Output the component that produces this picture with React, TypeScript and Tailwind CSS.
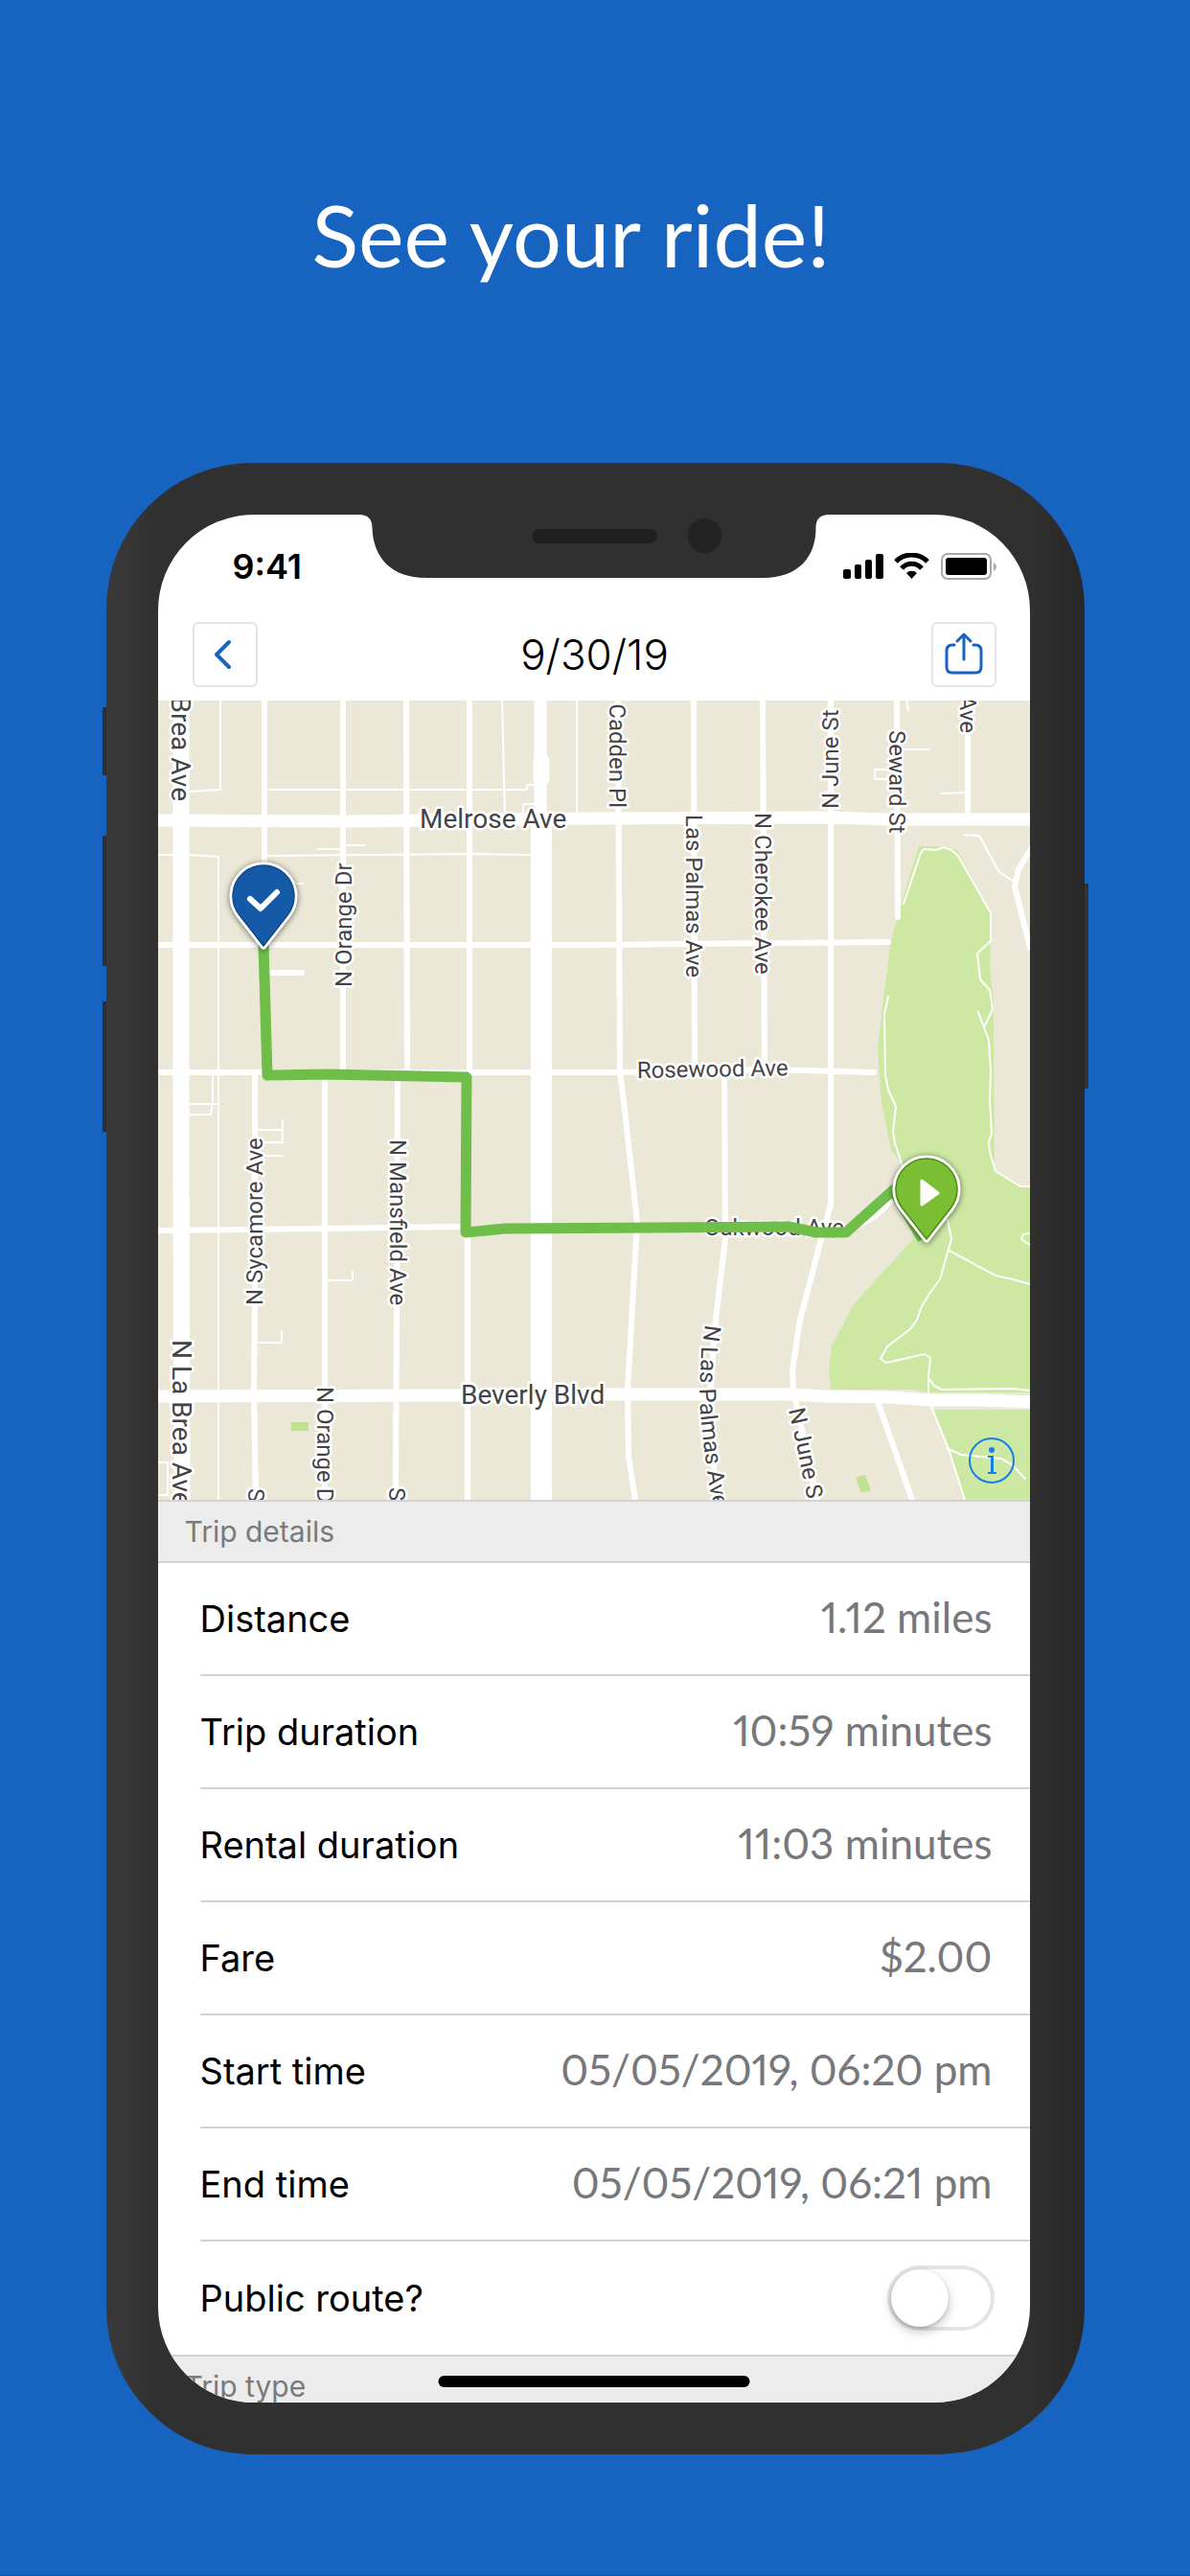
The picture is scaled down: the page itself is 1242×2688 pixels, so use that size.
import { useState } from "react";

const ROADS: { width: number; paths: string[] }[] = [
  {
    width: 2,
    paths: [
      "M65 0V93L33 95",
      "M0 161H16M33 161L63 163V834",
      "M359 0L362 119",
      "M437 0V118",
      "M114 93H385V88H393M381 118V108H393",
      "M114 162L325 160L388 161",
      "M166 155H190M196 151H216M145 191H151",
      "M57 391V419L55 432H33M33 421H62",
      "M104 448H130V438M108 461H130V450M110 475H130",
      "M178 605H203V596M103 670H129V658",
      "M0 795H10V829H0",
      "M781 0L783 10M779 51H805M761 72H748V82H761M818 97L842 96",
      "M841 140L857 141L878 179L892 188",
    ],
  },
  {
    width: 6,
    paths: [
      "M111 0V259",
      "M193 0V388",
      "M259 0L260 388",
      "M325 0V388",
      "M480 0L482 387L486 419L500 544L490 719L491 789L498 834",
      "M559 0L560 387",
      "M631 0L633 387",
      "M702 0V526L692 562L670 646L662 699L663 720L688 834",
      "M771 0L772 226",
      "M845 0V122",
      "M0 255H455L762 252",
      "M117 284H150",
      "M0 388H482L640 385L747 388",
      "M591 387L592 562L582 646L575 740L583 834",
      "M0 553L174 551L315 549",
      "M718 553L738 544L750 537L765 522",
      "M101 391V632L100 719L102 834",
      "M174 391V834",
      "M250 391L249 632L248 834",
      "M323 556V834",
      "M752 734L787 834",
      "M912 153L898 176L894 194L910 258",
    ],
  },
  {
    width: 13,
    paths: [
      "M0 125L200 126L455 123L702 122L760 124H910",
      "M0 726L315 725L455 724H662L695 726L765 727L805 730L860 730L910 732",
      "M399 0V125",
    ],
  },
  { width: 17, paths: ["M24 0V500L25 834", "M400 63V82"] },
  { width: 22, paths: ["M400 130V834"] },
];

const TRAILS = [
  "M778 212L796 159L799 155L812 156L820 153L828 156L835 162L869 222V251L855 264L858 291L868 302L871 322L862 341L867 354L869 387L868 417L870 451L867 462L868 471L874 491L900 507H910",
  "M862 341L856 325",
  "M762 309L758 327L759 391L762 406L770 424L767 449L769 462L777 486",
  "M824 542L828 562L816 604L807 616L797 632L792 646L785 656L761 674L754 687L760 691L800 682L806 686L804 706V726",
  "M804 707L810 715L818 719L892 718L910 720",
  "M826 574L874 600L892 604L910 609",
  "M910 556L903 557L901 562L910 568",
  "M807 737L825 781L842 834",
  "M823 780L838 787L880 791L892 798L905 812",
];

type StreetLabel = {
  text: string;
  x: number;
  y: number;
  angle: number;
  major?: boolean;
  end?: boolean;
};

const STREET_LABELS: StreetLabel[] = [
  { text: "Brea Ave", x: 14, y: 105, angle: 90, major: true, end: true },
  { text: "Melrose Ave", x: 273, y: 133, angle: 0, major: true },
  { text: "N Orange Dr", x: 202, y: 299, angle: -90 },
  { text: "Cadden Pl", x: 471, y: 112, angle: 90, end: true },
  { text: "Las Palmas Ave", x: 551, y: 119, angle: 90 },
  { text: "N Cherokee Ave", x: 623, y: 117, angle: 90 },
  { text: "N June St", x: 710, y: 113, angle: -90 },
  { text: "Seward St", x: 763, y: 31, angle: 90 },
  { text: "Ave", x: 837, y: 34, angle: 90, end: true },
  { text: "Rosewood Ave", x: 500, y: 394, angle: -1 },
  { text: "N Sycamore Ave", x: 109, y: 631, angle: -90 },
  { text: "N Mansfield Ave", x: 242, y: 458, angle: 90 },
  { text: "N La Brea Ave", x: 15, y: 667, angle: 90, major: true },
  { text: "N Orange D", x: 166, y: 716, angle: 90 },
  { text: "S", x: 94, y: 822, angle: 90 },
  { text: "S", x: 241, y: 821, angle: 90 },
  { text: "Beverly Blvd", x: 316, y: 734, angle: 0, major: true },
  { text: "Oakwood Ave", x: 570, y: 558, angle: 0 },
];

const TRIP_DETAILS = [
  { label: "Distance", value: "1.12 miles" },
  { label: "Trip duration", value: "10:59 minutes" },
  { label: "Rental duration", value: "11:03 minutes" },
  { label: "Fare", value: "$2.00" },
  { label: "Start time", value: "05/05/2019, 06:20 pm" },
  { label: "End time", value: "05/05/2019, 06:21 pm" },
];

const PIN_PATH = "M0 52L-25 20A32 32 0 1 1 25 20Z";

function MapPin({ x, y, fill, edge, children }: { x: number; y: number; fill: string; edge: string; children: React.ReactNode }) {
  return (
    <g transform={`translate(${x} ${y})`}>
      <path d={PIN_PATH} className="fill-white stroke-white drop-shadow-[0_1px_3px_rgba(0,0,0,0.55)]" strokeWidth="7" strokeLinejoin="round" />
      <path d={PIN_PATH} fill={fill} stroke={edge} strokeWidth="1.5" strokeLinejoin="round" />
      {children}
    </g>
  );
}

function RouteMap() {
  return (
    <div className="relative">
      <svg viewBox="0 0 910 834" className="block w-full bg-[#ece8d8]" role="img" aria-label="Route map">
        {/* Parks */}
        <g className="fill-[#cce8a2]">
          <path d="M794 152L822 152L835 157L869 222V252L868 277L872 314L873 489L900 507H910V722H803L788 719H702L700 699L703 674L725 631L788 562L785 530L775 482L765 469L755 419L751 364L757 311L765 251L777 207Z" />
          <path d="M809 740H910V834H842L825 781Z" />
        </g>
        <g className="fill-[#c3e193]">
          <path d="M139 753H157V762H139Z" />
          <path d="M728 811L738 808L744 824L734 827Z" />
        </g>

        {/* Streets */}
        <g className="fill-none stroke-white" strokeLinejoin="round">
          {TRAILS.map((d) => (
            <path key={d} d={d} strokeWidth="2" strokeLinecap="round" />
          ))}
          {ROADS.map((group) =>
            group.paths.map((d) => <path key={d} d={d} strokeWidth={group.width} strokeLinecap="round" />)
          )}
        </g>

        {/* Street names */}
        <g className="fill-[#444446] stroke-white font-['Roboto',sans-serif]" strokeWidth="5" strokeLinejoin="round" paintOrder="stroke">
          {STREET_LABELS.map((label) => (
            <text
              key={`${label.text}-${label.x}`}
              x={label.x}
              y={label.y}
              transform={`rotate(${label.angle} ${label.x} ${label.y})`}
              textAnchor={label.end ? "end" : "start"}
              fontSize={label.major ? 28 : 24}
            >
              {label.text}
            </text>
          ))}
          <path id="las-palmas" d="M571 651L567 680L565 719L566 745L571 790L577 830L590 890" fill="none" stroke="none" />
          <path id="june" d="M658 740L668 785L681 850L700 930" fill="none" stroke="none" />
          <text fontSize="24">
            <textPath href="#las-palmas">N Las Palmas Ave</textPath>
          </text>
          <text fontSize="24">
            <textPath href="#june">N June S</textPath>
          </text>
        </g>

        {/* Ride */}
        <path
          d="M110 255L114 391L177 390L322 393L321 555L362 551L658 549L687 555H718L767 511L798 562"
          className="fill-none stroke-[#6ebe49]"
          strokeWidth="11"
          strokeLinejoin="round"
        />
        <MapPin x={110} y={204} fill="#155aa6" edge="#0d478c">
          <path d="M-14 3L-3 13L14 -4" className="fill-none stroke-white" strokeWidth="6" strokeLinecap="round" strokeLinejoin="round" />
        </MapPin>
        <MapPin x={802} y={510} fill="#7abf33" edge="#4b8a12">
          <path d="M-5 -9L12 4L-5 16Z" className="fill-white stroke-white" strokeWidth="3" strokeLinejoin="round" />
        </MapPin>
      </svg>
      <button type="button" aria-label="Map information" className="absolute right-4 bottom-[17px]">
        <svg viewBox="0 0 48 48" className="size-12">
          <circle cx="24" cy="24" r="23" className="fill-none stroke-[#1480e6]" strokeWidth="2" />
          <circle cx="24" cy="13" r="3" className="fill-[#1480e6]" />
          <path d="M20 19H26V36H29V38H20V36H23V21H20Z" className="fill-[#1480e6]" />
        </svg>
      </button>
    </div>
  );
}

function Notch() {
  return (
    <svg viewBox="210 0 491 66" className="absolute top-0 left-1/2 z-10 w-[491px] -translate-x-1/2" aria-hidden="true">
      <path d="M210 0C220 0 224 5 224 14C225 45 244 66 280 66H632C668 66 687 45 687 14C687 5 691 0 701 0Z" className="fill-[#303030]" />
      <rect x="391" y="15" width="130" height="15" rx="7" className="fill-[#202020]" />
      <circle cx="571" cy="22" r="18" className="fill-[#232323]" />
    </svg>
  );
}

function StatusBar() {
  return (
    <div className="flex h-28 items-center justify-between pr-[34px] pb-1 pl-[78px]">
      <span className="text-[36px] font-semibold">9:41</span>
      <svg viewBox="0 0 161 28" className="h-7 w-[161px]" aria-hidden="true">
        <rect x="0" y="17" width="8" height="10" rx="2" />
        <rect x="12" y="12" width="7" height="15" rx="2" />
        <rect x="23" y="7" width="7" height="20" rx="2" />
        <rect x="34" y="1" width="8" height="26" rx="2" />
        <g className="fill-none stroke-black" strokeWidth="5">
          <path d="M55 9A23 23 0 0 1 88 9" />
          <path d="M61 16A14 14 0 0 1 82 16" />
        </g>
        <path d="M66 21A8 8 0 0 1 77 21L71.500 27Z" />
        <rect x="103" y="1" width="51" height="26" rx="6" className="fill-none stroke-[#a8a8a8]" strokeWidth="2" />
        <rect x="107" y="5" width="43" height="18" rx="3" />
        <path d="M157 10Q160 12 160 14Q160 17 157 19Z" className="fill-[#a8a8a8]" />
      </svg>
    </div>
  );
}

function NavBar() {
  const buttonClass = "flex h-[68px] w-[68px] items-center justify-center rounded-md border-2 border-[#e4e4e6]";

  return (
    <div className="flex items-start justify-between pr-[34px] pb-3.5 pl-9">
      <button type="button" aria-label="Back" className={buttonClass}>
        <svg viewBox="-24 -24 48 48" className="size-12 fill-none stroke-[#1763bf]" strokeWidth="4" strokeLinecap="round" strokeLinejoin="round">
          <path d="M4 -13L-9 0L4 13" />
        </svg>
      </button>
      <h2 className="text-[44px] leading-[68px] font-light">9/30/19</h2>
      <button type="button" aria-label="Share" className={buttonClass}>
        <svg viewBox="-24 -24 48 48" className="size-12 fill-none stroke-[#1763bf]" strokeWidth="3" strokeLinecap="round" strokeLinejoin="round">
          <path d="M-10 -10H-12Q-18 -10 -18 -4V13Q-18 19 -12 19H12Q18 19 18 13V-4Q18 -10 12 -10H10" />
          <path d="M0 5V-21M-7 -14L0 -21L7 -14" />
        </svg>
      </button>
    </div>
  );
}

function SectionHeader({ title, className = "" }: { title: string; className?: string }) {
  return (
    <h3 className={`flex h-[66px] items-center border-y-2 border-[#d3d3d5] bg-[#ececec] pl-7 text-[30px] text-[#7a7a7c] ${className}`}>
      {title}
    </h3>
  );
}

function DetailsList() {
  const [isPublic, setIsPublic] = useState(false);

  return (
    <div className="pl-11">
      <dl>
        {TRIP_DETAILS.map((row) => (
          <div key={row.label} className="flex h-[118px] items-center justify-between border-b-2 border-[#d3d3d5] pr-[39px]">
            <dt className="text-[38px]">{row.label}</dt>
            <dd className="pb-1 font-['Lato',sans-serif] text-[44px] text-[#77787b] proportional-nums">{row.value}</dd>
          </div>
        ))}
      </dl>
      <div className="flex h-[118px] items-center justify-between pr-[37px]">
        <label htmlFor="public-route" className="text-[38px]">
          Public route?
        </label>
        <input
          id="public-route"
          type="checkbox"
          role="switch"
          checked={isPublic}
          onChange={(e) => setIsPublic(e.target.checked)}
          className="h-[68px] w-28 appearance-none rounded-full border-4 border-[#e5e5e5] bg-white transition-colors before:block before:size-[60px] before:rounded-full before:bg-white before:shadow-[0_5px_12px_rgba(0,0,0,0.22),0_1px_3px_rgba(0,0,0,0.2)] before:transition-transform checked:bg-[#4cd964] checked:before:translate-x-11"
        />
      </div>
    </div>
  );
}

export default function App() {
  return (
    <main className="flex min-h-screen flex-col items-center border-b-2 border-[#2b4f7f] bg-[#1664c0] pb-[126px] text-black font-['Inter',sans-serif]">
      <h1 className="pt-[190px] pr-[50px] pb-[185px] font-['Lato',sans-serif] text-[90px] leading-[108px] text-white">See your ride!</h1>

      <div className="relative w-full max-w-[1021px]">
        {/* Side buttons */}
        <div className="absolute top-[255px] -left-1 h-[71px] w-2 bg-[#303030]" />
        <div className="absolute top-[389px] -left-1 h-[136px] w-2 bg-[#303030]" />
        <div className="absolute top-[562px] -left-1 h-[136px] w-2 bg-[#303030]" />
        <div className="absolute top-[439px] -right-1 h-[214px] w-2 bg-[#333333]" />

        <div className="relative rounded-[152px] bg-[linear-gradient(to_right,#3a3a3a,#303030_54px,#303030_calc(100%-57px),#272727)] py-[54px] pr-[57px] pl-[54px]">
          <div className="relative overflow-hidden rounded-[100px] bg-white">
            <Notch />
            <StatusBar />
            <NavBar />
            <RouteMap />
            <SectionHeader title="Trip details" />
            <DetailsList />
            <SectionHeader title="Trip type" className="-mb-4" />
            <div className="absolute bottom-4 left-1/2 h-3 w-[325px] -translate-x-1/2 rounded-full bg-black" />
          </div>
        </div>
      </div>
    </main>
  );
}
